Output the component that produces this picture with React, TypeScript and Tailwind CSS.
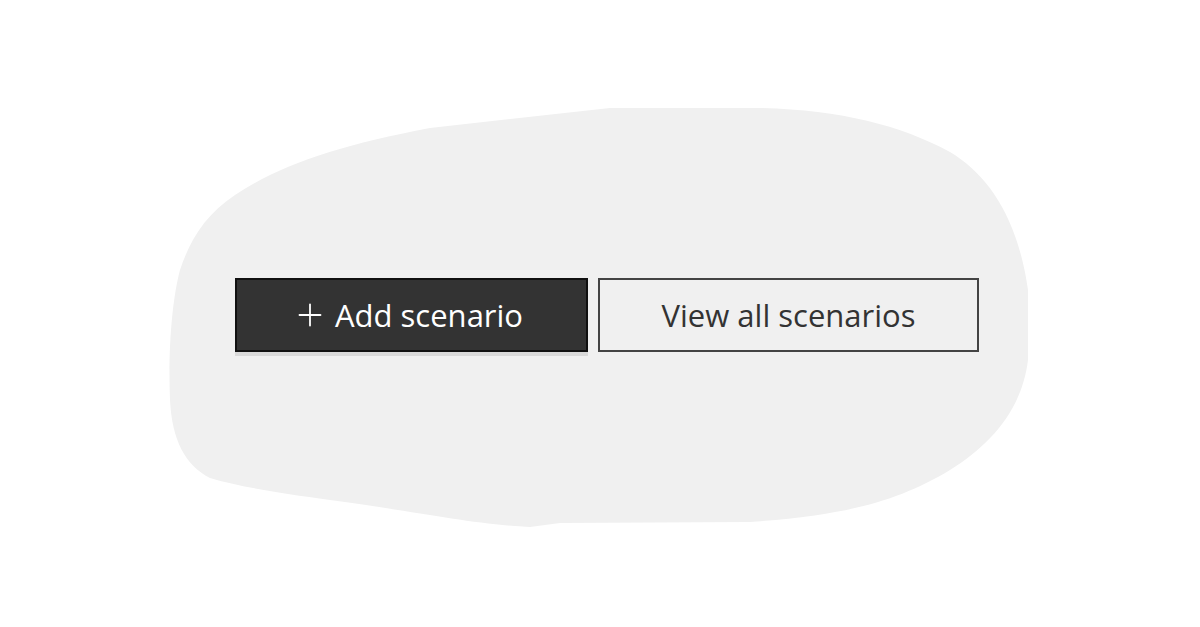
import { Plus } from 'lucide-react';

export default function App() {
  return (
    <div className="relative w-[1200px] h-[627px] bg-white overflow-hidden" style={{ fontFamily: '"Open Sans", "Noto Sans", sans-serif' }}>
      {/* Blob backdrop */}
      <svg className="absolute inset-0" width="1200" height="627" viewBox="0 0 1200 627">
        <path
          d="M610 108 L760 108 C840 110 900 125 950 152 C990 176 1018 220 1028 290 L1028 360 C1022 410 990 445 950 470 C900 500 850 515 750 522 L560 523 L530 527 C470 524 420 512 330 500 C280 493 240 487 210 478 C185 465 172 440 170 400 C168 350 172 300 180 270 C190 240 205 215 235 195 C280 165 340 145 430 128 Z"
          fill="#f0f0f0"
        />
      </svg>

      <div className="relative flex gap-[10px] pl-[235px] pt-[278px]">
        <button className="w-[353px] h-[74px] flex items-center justify-start pl-[55px] gap-[7px] bg-[#333333] border-2 border-[#111111] text-white text-[31px] shadow-[0_4px_0_#d9d9d9]">
          <Plus className="w-[36px] h-[36px]" strokeWidth={1.2} />
          <span>Add scenario</span>
        </button>
        <button className="w-[381px] h-[74px] flex items-center justify-center bg-[#f0f0f0] border-2 border-[#444444] text-[#333333] text-[31px]">
          View all scenarios
        </button>
      </div>
    </div>
  );
}
